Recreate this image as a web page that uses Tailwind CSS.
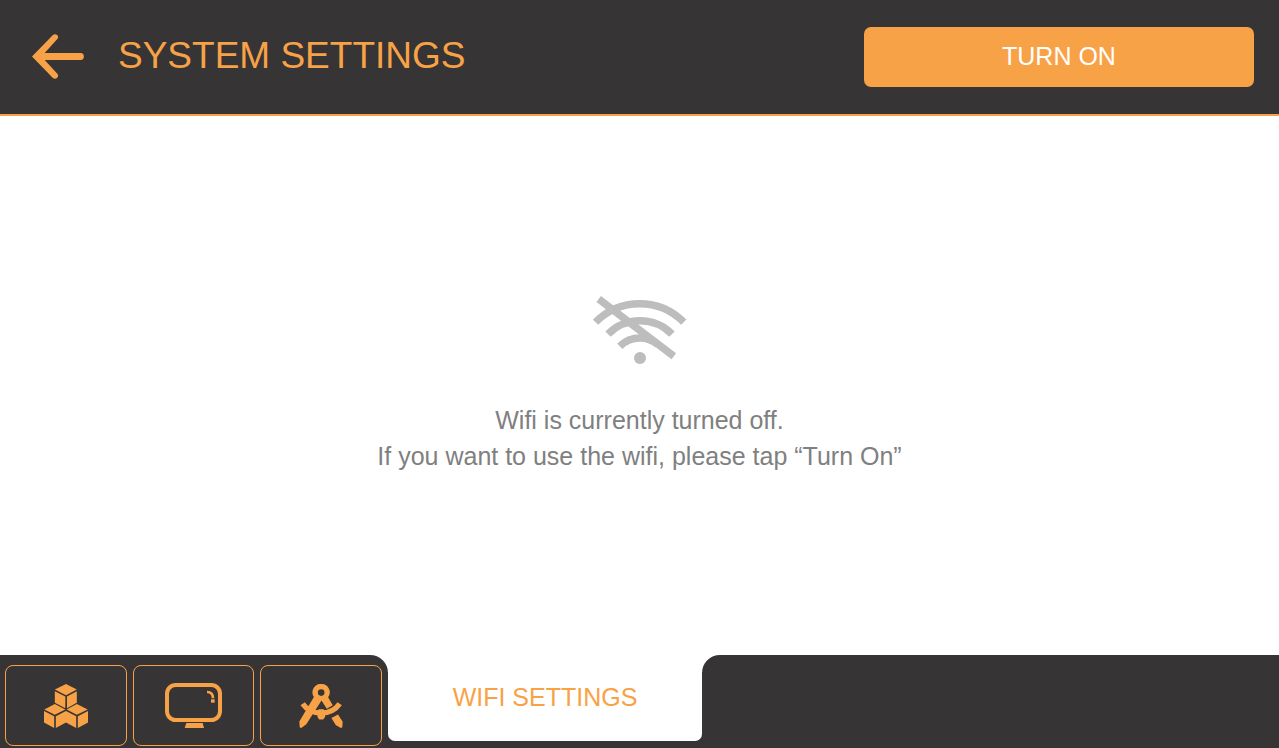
<!DOCTYPE html>
<html lang="en">
<head>
    <meta charset="UTF-8">
    <meta name="viewport" content="width=device-width, initial-scale=1.0">
    <title>System Settings</title>
    <script src="https://cdn.jsdelivr.net/npm/@tailwindcss/browser@4"></script>
</head>
<body class="flex flex-col min-h-screen bg-white font-['Liberation_Sans',Arial,sans-serif] text-[25px]">

    <!-- Header -->
    <header class="flex items-center justify-between bg-[#373435] border-b-2 border-[#f8a247] pl-8 pr-[25px] py-[27px]">
        <div class="flex items-center gap-[34px] pb-[2px] text-[#f8a247]">
            <button type="button" aria-label="Back" class="cursor-pointer">
                <svg class="block w-[52px] h-[45px]" viewBox="0 0 156 135" fill="currentColor">
                    <path d="M0 67.500 L62 4 C70 -4 84 6 76 15 L38 57 H146 C159 57 159 78 146 78 H38 L76 119 C84 129 70 139 62 131 Z"/>
                </svg>
            </button>
            <h1 class="text-[37px] leading-10">SYSTEM SETTINGS</h1>
        </div>
        <button type="button" class="w-[390px] h-[60px] rounded-[7px] bg-[#f8a247] text-white cursor-pointer">TURN ON</button>
    </header>

    <!-- Wifi state -->
    <main class="flex flex-1 flex-col items-center justify-center gap-[38px] pb-[2px] text-center text-[#808080]">
        <svg class="w-[94px] h-[68px]" viewBox="593 296 94 68" fill="none" stroke="#bdbdbd" stroke-width="7.500">
            <path d="M595.500 322.200 A61.800 61.800 0 0 1 683.800 322.200"/>
            <path d="M608 334.200 A44.900 44.900 0 0 1 672 334.200"/>
            <path d="M619.800 346.200 A29 29 0 0 1 640 338 Q650 338 658 344.500"/>
            <path d="M598.700 299 L673.800 356.200"/>
            <circle cx="640" cy="358" r="6" fill="#bdbdbd" stroke="none"/>
        </svg>
        <p class="leading-9">Wifi is currently turned off.<br>If you want to use the wifi, please tap “Turn On”</p>
    </main>

    <!-- Bottom tabs -->
    <nav class="flex h-[93px]">
        <div class="flex w-[388px] gap-[6px] pt-[10px] pb-[2px] pl-[5px] pr-[6px] rounded-tr-[18px] bg-[#373435] text-[#f8a247]">
            <button type="button" aria-label="Modules" class="flex flex-1 items-center justify-center border border-[#f8a247] rounded-[8px] cursor-pointer">
                <svg class="w-[44px] h-[44px]" viewBox="129 101 134 134" fill="currentColor">
                    <path d="M196 101 L229 118 L196 135 L162 118 Z"/>
                    <path d="M162 123 L194 139 V175 L162 158 Z"/>
                    <path d="M229 123 L199 139 V175 L229 158 Z"/>
                    <path d="M162 162 L194 179 L162 195 L130 179 Z"/>
                    <path d="M229 162 L262 179 L229 195 L198 179 Z"/>
                    <path d="M129 183 L160 199 V235 L129 218 Z"/>
                    <path d="M263 183 L232 199 V235 L263 218 Z"/>
                    <path d="M165 199 L196 183 L227 199 V235 L196 218 L165 235 Z"/>
                </svg>
            </button>
            <button type="button" aria-label="Display" class="flex flex-1 items-center justify-center border border-[#f8a247] rounded-[8px] cursor-pointer">
                <svg class="w-[57px] h-[45px]" viewBox="111 99 171 135" fill="currentColor">
                    <rect x="117" y="105" width="159" height="105" rx="26" fill="none" stroke="currentColor" stroke-width="12"/>
                    <path d="M175 219 H224 L228 234 H170 Z"/>
                    <path d="M237 126 C249 126 255 132 255 145" fill="none" stroke="currentColor" stroke-width="8"/>
                    <rect x="249" y="148" width="11" height="10"/>
                </svg>
            </button>
            <button type="button" aria-label="Calibration" class="flex flex-1 items-center justify-center border border-[#f8a247] rounded-[8px] cursor-pointer">
                <svg class="w-[44px] h-[44px]" viewBox="6 9 133 133" fill="currentColor">
                    <path fill-rule="evenodd" d="M73 9 A25 25 0 0 1 94 49 L108 73 L90 84 L74 59 L30 128 Q28 132 24 134 L14 141 Q9 143 8 138 L7 122 L51 48 A25 25 0 0 1 73 9 Z M73 25 A10 10 0 1 0 73 45 A10 10 0 1 0 73 25 Z"/>
                    <path d="M17 69 C31 89 50 97 73 97 C96 97 115 89 129 69" fill="none" stroke="currentColor" stroke-width="16"/>
                    <path d="M66 85 H80 L85 90 V109 L79 116 H67 L62 109 V90 Z"/>
                    <path d="M104 112 L124 101 L138 123 L137 138 Q136 143 131 141 L117 133 Z"/>
                </svg>
            </button>
        </div>
        <div class="w-[314px] pb-[7px] bg-linear-to-t from-[#373435] from-50% to-white to-50%">
            <button type="button" aria-current="page" class="w-full h-full rounded-b-[7px] bg-white text-[#f8a247] cursor-pointer">WIFI SETTINGS</button>
        </div>
        <div class="flex-1 rounded-tl-[18px] bg-[#373435]"></div>
    </nav>

</body>
</html>
